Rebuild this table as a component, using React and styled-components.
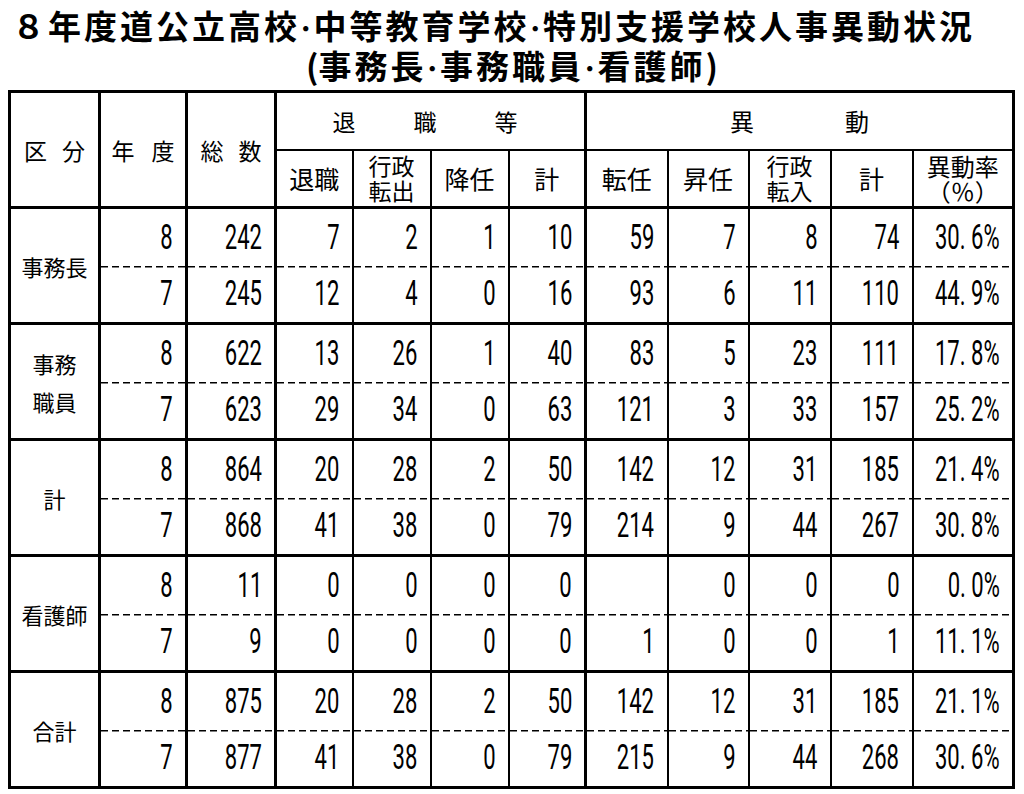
import React from 'react';
import styled, { createGlobalStyle, css } from 'styled-components';

const GlobalStyle = createGlobalStyle`
  html, body { margin: 0; padding: 0; background: #fff; }
  body { font-family: "Noto Sans CJK JP", "Noto Sans", sans-serif; color: #000; }
`;

const Page = styled.div`
  width: 1024px;
  height: 794px;
  padding-top: 5px;
  box-sizing: border-box;
  overflow: hidden;
`;

const TitleBlock = styled.header`
  font-family: "Noto Sans CJK JP", sans-serif;
  font-weight: 700;
  font-size: 33px;
  line-height: 40px;
  letter-spacing: 3px;
  white-space: nowrap;
  color: #000;
`;

const TitleLine = styled.div`
  height: 40px;
  padding-left: ${p => p.$indent || 0}px;
  text-align: ${p => p.$align || 'left'};
`;

const Dot = styled.span`
  font-size: 27px;
  line-height: 0;
  letter-spacing: 0;
  margin-left: -1px;
  margin-right: 1px;
`;

const Paren = styled.span`
  display: inline-block;
  width: 14px;
  letter-spacing: 0;
  text-align: ${p => (p.$side === 'open' ? 'right' : 'left')};
`;

const Table = styled.table`
  margin: 5px 0 0 8px;
  width: 1007px;
  border-collapse: collapse;
  table-layout: fixed;
`;

const Col = styled.col`
  width: ${p => p.$w}px;
`;

const B = {
  thick: '3px solid #000',
  thin: '2px solid #000',
  none: 'none',
};

const borders = css`
  border-left: ${p => B[p.$l || 'thin']};
  border-top: ${p => (p.$t === 'dash' ? 'none' : B[p.$t || 'thin'])};
  border-right: ${p => (p.$r ? B[p.$r] : 'none')};
  border-bottom: ${p => (p.$b ? B[p.$b] : 'none')};
  background-image: ${p =>
    p.$t === 'dash'
      ? 'repeating-linear-gradient(to right, #000 0 7px, transparent 7px 11px)'
      : 'none'};
  background-size: 100% 1.5px;
  background-repeat: no-repeat;
  background-position: left top;
`;

const Row = styled.tr`
  height: 58px;
`;

const Th = styled.th`
  ${borders};
  padding: 0;
  font-weight: 400;
  font-size: ${p => p.$fs || 25}px;
  line-height: ${p => p.$lh || 30}px;
  text-align: center;
  vertical-align: middle;
  white-space: nowrap;
`;

const Spread = styled.div`
  display: flex;
  justify-content: center;
  gap: ${p => p.$gap}px;
  padding-right: ${p => p.$pr || 0}px;
`;

const Label = styled.td`
  ${borders};
  padding: 0;
  font-size: 22px;
  line-height: 38px;
  text-align: center;
  vertical-align: middle;
`;

const Td = styled.td`
  ${borders};
  padding: 0 12px 0 0;
  vertical-align: middle;
`;

const NumBox = styled.div`
  display: flex;
  justify-content: flex-end;
`;

const Num = styled.span`
  display: inline-block;
  font-family: Roboto, "Liberation Sans", Arial, sans-serif;
  font-weight: 400;
  font-size: 35px;
  line-height: 35px;
  white-space: pre;
  transform: scaleX(0.63);
  transform-origin: right center;
`;

const colWidths = [90, 87, 89, 77, 78, 78, 77, 82, 81, 82, 82, 101];
const colLeft = ['thick', 'thick', 'thick', 'thick', 'thin', 'thin', 'thin', 'thick', 'thin', 'thin', 'thin', 'thin'];

const groups = [
  {
    label: ['事務長'],
    rows: [
      ['8', '242', '7', '2', '1', '10', '59', '7', '8', '74', '30. 6%'],
      ['7', '245', '12', '4', '0', '16', '93', '6', '11', '110', '44. 9%'],
    ],
  },
  {
    label: ['事務', '職員'],
    rows: [
      ['8', '622', '13', '26', '1', '40', '83', '5', '23', '111', '17. 8%'],
      ['7', '623', '29', '34', '0', '63', '121', '3', '33', '157', '25. 2%'],
    ],
  },
  {
    label: ['計'],
    rows: [
      ['8', '864', '20', '28', '2', '50', '142', '12', '31', '185', '21. 4%'],
      ['7', '868', '41', '38', '0', '79', '214', '9', '44', '267', '30. 8%'],
    ],
  },
  {
    label: ['看護師'],
    rows: [
      ['8', '11', '0', '0', '0', '0', '', '0', '0', '0', '0. 0%'],
      ['7', '9', '0', '0', '0', '0', '1', '0', '0', '1', '11. 1%'],
    ],
  },
  {
    label: ['合計'],
    rows: [
      ['8', '875', '20', '28', '2', '50', '142', '12', '31', '185', '21. 1%'],
      ['7', '877', '41', '38', '0', '79', '215', '9', '44', '268', '30. 6%'],
    ],
  },
];

function Chars({ text, gap, pr }) {
  return (
    <Spread $gap={gap} $pr={pr}>
      {text.split('').map((c, i) => (
        <span key={i}>{c}</span>
      ))}
    </Spread>
  );
}

export default function App() {
  return (
    <>
      <GlobalStyle />
      <Page>
        <TitleBlock>
          <TitleLine $indent={12}>
            ８年度道公立高校<Dot>･</Dot>中等教育学校<Dot>･</Dot>特別支援学校人事異動状況
          </TitleLine>
          <TitleLine $align="center">
            <Paren $side="open">(</Paren>事務長<Dot>･</Dot>事務職員<Dot>･</Dot>看護師<Paren $side="close">)</Paren>
          </TitleLine>
        </TitleBlock>
        <Table>
          <colgroup>
            {colWidths.map((w, i) => (
              <Col key={i} $w={w} />
            ))}
          </colgroup>
          <thead>
            <Row>
              <Th rowSpan={2} $l="thick" $t="thick" $fs={23}>
                <Chars text="区分" gap={15} />
              </Th>
              <Th rowSpan={2} $l="thick" $t="thick" $fs={23}>
                <Chars text="年度" gap={17} />
              </Th>
              <Th rowSpan={2} $l="thick" $t="thick" $fs={23}>
                <Chars text="総数" gap={15} />
              </Th>
              <Th colSpan={4} $l="thick" $t="thick" $fs={23}>
                <Chars text="退職等" gap={58} pr={11} />
              </Th>
              <Th colSpan={5} $l="thick" $t="thick" $r="thick" $fs={24}>
                <Chars text="異動" gap={91} />
              </Th>
            </Row>
            <Row>
              <Th $l="thick">退職</Th>
              <Th $fs={23} $lh={25}>行政<br />転出</Th>
              <Th>降任</Th>
              <Th>計</Th>
              <Th $l="thick">転任</Th>
              <Th>昇任</Th>
              <Th $fs={23} $lh={25}>行政<br />転入</Th>
              <Th>計</Th>
              <Th $r="thick" $fs={24} $lh={25}>異動率<br />（％）</Th>
            </Row>
          </thead>
          <tbody>
            {groups.map((g, gi) => {
              const last = gi === groups.length - 1;
              return g.rows.map((r, ri) => (
                <Row key={`${gi}-${ri}`}>
                  {ri === 0 && (
                    <Label rowSpan={2} $l="thick" $t="thick" $b={last ? 'thick' : undefined}>
                      {g.label.map((l, li) => (
                        <div key={li}>{l}</div>
                      ))}
                    </Label>
                  )}
                  {r.map((v, ci) => (
                    <Td
                      key={ci}
                      $l={colLeft[ci + 1]}
                      $t={ri === 0 ? 'thick' : 'dash'}
                      $r={ci === r.length - 1 ? 'thick' : undefined}
                      $b={last && ri === 1 ? 'thick' : undefined}
                    >
                      <NumBox>
                        <Num>{v}</Num>
                      </NumBox>
                    </Td>
                  ))}
                </Row>
              ));
            })}
          </tbody>
        </Table>
      </Page>
    </>
  );
}
